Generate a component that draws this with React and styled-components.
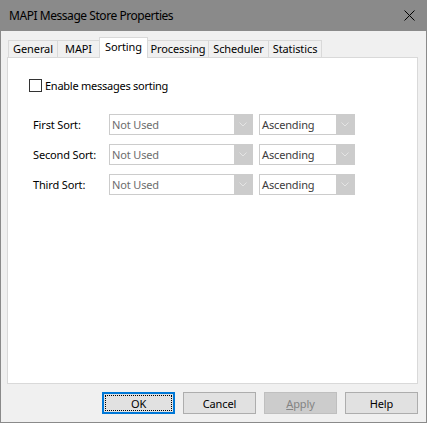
import React from "react";
import styled, { createGlobalStyle } from "styled-components";

const Global = createGlobalStyle`
  html, body { margin: 0; padding: 0; background: #f0f0f0; }
  body { font-family: "Noto Sans", "Open Sans", sans-serif; font-size: 11px; color: #000; }
  * { box-sizing: border-box; }
`;

const Window = styled.div`
  width: 427px;
  height: 423px;
  display: flex;
  flex-direction: column;
  background: #f0f0f0;
  border: 1px solid #8a8a8a;
  border-top: none;
`;

const TitleBar = styled.div`
  height: 31px;
  margin: 0 -1px;
  background: #8a8a8a;
  display: flex;
  align-items: center;
  justify-content: space-between;
  padding: 0 9px 1px 9px;
  flex: none;
`;

const Title = styled.div`
  font-size: 12px;
  color: #000;
  letter-spacing: -0.45px;
`;

const Close = styled.svg`
  width: 11px;
  height: 11px;
  margin-right: 3px;
`;

const Body = styled.div`
  flex: 1;
  display: flex;
  flex-direction: column;
  padding: 7px 8px 8px 6px;
`;

const TabStrip = styled.div`
  display: flex;
  align-items: flex-end;
  height: 20px;
  padding-left: 1px;
  position: relative;
  z-index: 1;
  margin-bottom: -1px;
`;

const Tab = styled.div`
  width: ${p => p.w}px;
  height: ${p => (p.active ? 21 : 18)}px;
  background: ${p => (p.active ? "#fff" : "#f0f0f0")};
  border: 1px solid #d9d9d9;
  border-bottom: ${p => (p.active ? "none" : "1px solid #d9d9d9")};
  border-left: ${p => (p.first || p.active ? "1px solid #d9d9d9" : "none")};
  border-right: ${p => (p.beforeActive ? "none" : "1px solid #d9d9d9")};
  display: flex;
  justify-content: center;
  align-items: ${p => (p.active ? "flex-start" : "center")};
  padding-top: ${p => (p.active ? 1 : 0)}px;
  line-height: 16px;
  white-space: nowrap;
  letter-spacing: -0.1px;
`;

const Panel = styled.div`
  height: 327px;
  background: #fff;
  border: 1px solid #d9d9d9;
  display: flex;
  flex-direction: column;
  padding: 20px 0 0 21px;
`;

const CheckRow = styled.label`
  display: flex;
  align-items: center;
  gap: 3px;
  height: 14px;
  margin-bottom: 22px;
  letter-spacing: -0.25px;
`;

const Box = styled.span`
  width: 13px;
  height: 13px;
  border: 1px solid #333;
  background: #fff;
  flex: none;
`;

const Grid = styled.div`
  display: grid;
  grid-template-columns: 70px 144px 96px;
  column-gap: 6px;
  row-gap: 9px;
  padding-left: 4px;
  align-items: center;
`;

const Label = styled.div`
  letter-spacing: -0.15px;
`;

const Combo = styled.div`
  height: 21px;
  border: 1px solid #cccccc;
  background: #fff;
  display: flex;
  align-items: stretch;
`;

const ComboText = styled.div`
  flex: 1;
  display: flex;
  align-items: center;
  padding-left: 2px;
  color: ${p => p.c};
  letter-spacing: -0.15px;
`;

const Arrow = styled.div`
  width: 18px;
  background: #cccccc;
  display: flex;
  align-items: center;
  justify-content: center;
`;

const Buttons = styled.div`
  display: flex;
  justify-content: flex-end;
  gap: 8px;
  margin-top: 8px;
`;

const Button = styled.div`
  width: 73px;
  height: 22px;
  background: ${p => (p.disabled ? "#cccccc" : "#e1e1e1")};
  border: ${p => (p.def ? "2px solid #0078d7" : p.disabled ? "1px solid #bfbfbf" : "1px solid #adadad")};
  color: ${p => (p.disabled ? "#838383" : "#000")};
  display: flex;
  align-items: center;
  justify-content: center;
  position: relative;
  letter-spacing: -0.1px;
  u { text-decoration: underline; }
`;

const Focus = styled.span`
  position: absolute;
  inset: 1px;
  border: 1px dotted #000;
`;

const Chevron = () => (
  <svg width="8" height="5" viewBox="0 0 8 5">
    <path d="M0.5 0.5 L4 4 L7.5 0.5" fill="none" stroke="#e4e4e4" strokeWidth="1" />
  </svg>
);

const ComboBox = ({ text, color }) => (
  <Combo>
    <ComboText c={color}>{text}</ComboText>
    <Arrow><Chevron /></Arrow>
  </Combo>
);

const tabs = [
  { t: "General", w: 50 },
  { t: "MAPI", w: 41 },
  { t: "Sorting", w: 49, active: true },
  { t: "Processing", w: 61 },
  { t: "Scheduler", w: 60 },
  { t: "Statistics", w: 53 },
];

const rows = ["First Sort:", "Second Sort:", "Third Sort:"];

export default function App() {
  return (
    <>
      <Global />
      <Window>
        <TitleBar>
          <Title>MAPI Message Store Properties</Title>
          <Close viewBox="0 0 11 11">
            <path d="M0.5 0.5 L10.5 10.5 M10.5 0.5 L0.5 10.5" stroke="#000" strokeWidth="1" />
          </Close>
        </TitleBar>
        <Body>
          <TabStrip>
            {tabs.map((tb, i) => (
              <Tab
                key={tb.t}
                w={tb.w}
                active={tb.active}
                first={i === 0}
                beforeActive={tabs[i + 1] && tabs[i + 1].active}
              >
                {tb.t}
              </Tab>
            ))}
          </TabStrip>
          <Panel>
            <CheckRow>
              <Box />
              <span>Enable messages sorting</span>
            </CheckRow>
            <Grid>
              {rows.map(r => (
                <React.Fragment key={r}>
                  <Label>{r}</Label>
                  <ComboBox text="Not Used" color="#6d6d6d" />
                  <ComboBox text="Ascending" color="#3c3c3c" />
                </React.Fragment>
              ))}
            </Grid>
          </Panel>
          <Buttons>
            <Button def><Focus />OK</Button>
            <Button>Cancel</Button>
            <Button disabled><span><u>A</u>pply</span></Button>
            <Button>Help</Button>
          </Buttons>
        </Body>
      </Window>
    </>
  );
}
